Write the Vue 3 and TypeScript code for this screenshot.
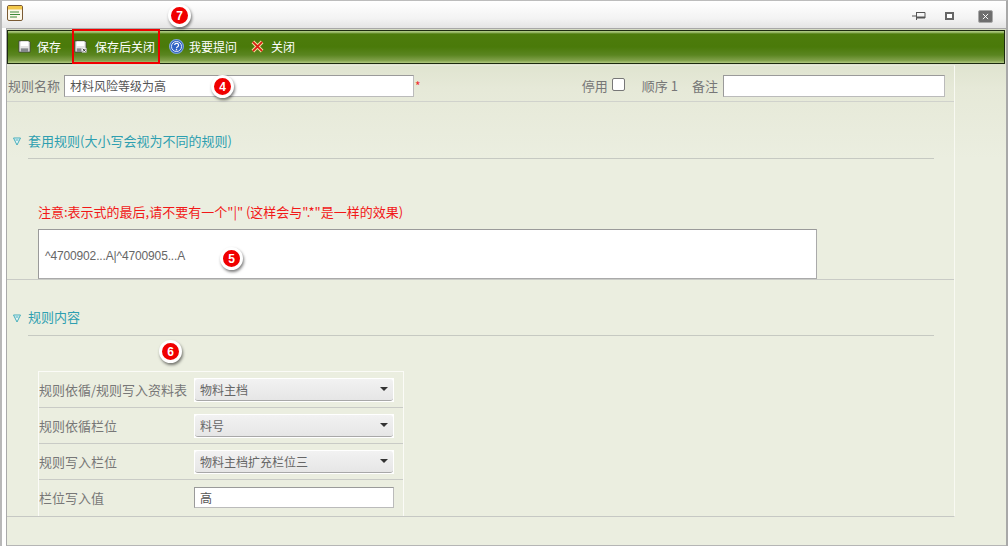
<template>
  <div class="window">
    <header class="titlebar">
      <svg class="app-icon" viewBox="0 0 16 16">
        <rect x="0.5" y="0.5" width="15" height="15" rx="1.5" fill="#fdf8ea" stroke="#7a5a34" />
        <rect x="1" y="1" width="14" height="3.5" fill="#f3c84c" />
        <path d="M3 7h9M3 9.5h10M3 12h7" stroke="#3f8a3a" stroke-width="1" />
      </svg>
      <div class="win-controls">
        <svg viewBox="0 0 14 10" class="win-pin">
          <path d="M0 5h4M4.500 1.500h8.500v5.500h-8.500zM4.500 1v8" fill="none" stroke="#555" stroke-width="1" />
          <path d="M5 5.500h8v1.500h-8z" fill="#555" />
        </svg>
        <span class="win-max"></span>
        <span class="win-close">
          <svg viewBox="0 0 8 8"><path d="M1 1l6 6M7 1l-6 6" stroke="#fff" stroke-width="1.100" /></svg>
        </span>
      </div>
    </header>

    <div class="body">
      <nav class="toolbar">
        <button v-for="btn in buttons" :key="btn.label" class="tool-btn" :class="btn.cls" type="button">
          <svg v-if="btn.icon === 'save'" class="tool-icon" viewBox="0 0 14 14">
            <path d="M1 1h10.500l1.500 1.500v10.500h-12z" fill="#e4e4e4" stroke="#3a3a3a" stroke-width="0.800" />
            <rect x="3" y="1.500" width="8" height="5" fill="#fff" />
            <rect x="3" y="9" width="8" height="4" fill="#85888c" />
          </svg>
          <svg v-else-if="btn.icon === 'saveclose'" class="tool-icon" viewBox="0 0 14 14">
            <path d="M1 1h10.500l1.500 1.500v10.500h-12z" fill="#e4e4e4" stroke="#3a3a3a" stroke-width="0.800" />
            <rect x="3" y="1.500" width="8" height="5" fill="#fff" />
            <rect x="3" y="9" width="5" height="4" fill="#85888c" />
            <rect x="8.500" y="8.500" width="5" height="5" fill="#eee" />
            <path d="M9.500 9.500l3 3M12.500 9.500l-3 3" stroke="#333" stroke-width="1" />
          </svg>
          <svg v-else-if="btn.icon === 'help'" class="tool-icon help-icon" viewBox="0 0 14 14">
            <circle cx="7" cy="7" r="6.500" fill="#2f62c4" stroke="#7fa6d8" />
            <circle cx="7" cy="7" r="4.700" fill="none" stroke="#fff" stroke-width="0.800" />
            <path d="M5.300 5.700a1.800 1.700 0 1 1 2.700 1.500c-.7.400-1 .7-1 1.400" fill="none" stroke="#fff" stroke-width="1.100" />
            <rect x="6.400" y="9.400" width="1.200" height="1.200" fill="#fff" />
          </svg>
          <svg v-else class="tool-icon" viewBox="0 0 14 14">
            <path d="M2 2l10 10M12 2l-10 10" stroke="#f4e3a0" stroke-width="4" />
            <path d="M2 2l10 10M12 2l-10 10" stroke="#d81e12" stroke-width="2" />
          </svg>
          <span>{{ btn.label }}</span>
        </button>
      </nav>

      <div class="panel">
        <div class="head-row">
          <label class="name-label">规则名称</label>
          <input class="name-input" type="text" value="材料风险等级为高" />
          <span class="required">*</span>
          <div class="head-right">
            <label>停用</label>
            <input class="check" type="checkbox" />
            <label class="order">顺序 1</label>
            <label>备注</label>
            <input class="note-input" type="text" />
          </div>
        </div>

        <section class="section-one">
          <h3 class="section-title">
            <svg class="arrow" viewBox="0 0 8 9"><path d="M0.500 1h7l-3.500 7zM2.500 3h3" fill="#e8f6f8" stroke="#45aebb" stroke-width="1" /></svg>
            <span>套用规则(大小写会视为不同的规则)</span>
          </h3>
          <p class="notice">注意:表示式的最后,请不要有一个"|" (这样会与".*"是一样的效果)</p>
          <div class="regex-box">^4700902...A|^4700905...A</div>
        </section>

        <section class="section-two">
          <h3 class="section-title">
            <svg class="arrow" viewBox="0 0 8 9"><path d="M0.500 1h7l-3.500 7zM2.500 3h3" fill="#e8f6f8" stroke="#45aebb" stroke-width="1" /></svg>
            <span>规则内容</span>
          </h3>
          <div class="form-table">
            <div v-for="row in rows" :key="row.label" class="form-row">
              <label class="form-label">{{ row.label }}</label>
              <div v-if="row.select" class="select-wrap">
                <div class="select-inner">
                  <span>{{ row.value }}</span>
                  <i class="caret"></i>
                </div>
              </div>
              <input v-else class="value-input" type="text" :value="row.value" />
            </div>
          </div>
        </section>
      </div>
    </div>

    <span class="redbox"></span>
    <span class="badge b7">7</span>
    <span class="badge b4">4</span>
    <span class="badge b5">5</span>
    <span class="badge b6">6</span>
  </div>
</template>

<script setup lang="ts">
interface ToolButton {
  label: string;
  icon: string;
  cls: string;
}

interface FormRow {
  label: string;
  value: string;
  select: boolean;
}

const buttons: ToolButton[] = [
  { label: '保存', icon: 'save', cls: 'btn-save' },
  { label: '保存后关闭', icon: 'saveclose', cls: 'btn-saveclose' },
  { label: '我要提问', icon: 'help', cls: 'btn-help' },
  { label: '关闭', icon: 'close', cls: 'btn-close' }
];

const rows: FormRow[] = [
  { label: '规则依循/规则写入资料表', value: '物料主档', select: true },
  { label: '规则依循栏位', value: '料号', select: true },
  { label: '规则写入栏位', value: '物料主档扩充栏位三', select: true },
  { label: '栏位写入值', value: '高', select: false }
];
</script>

<style>
html,
body {
  margin: 0;
  overflow: hidden;
}
</style>

<style scoped>
.window {
  position: relative;
  box-sizing: border-box;
  width: 1008px;
  height: 546px;
  display: flex;
  flex-direction: column;
  background: #fff;
  border-top: 1px solid #bcbcbc;
  border-left: 2px solid #b8b8b8;
  border-right: 2px solid #a8a8a8;
  font-family: "Noto Sans CJK SC", "Liberation Sans", sans-serif;
  font-size: 13px;
  color: #777;
}

.titlebar {
  height: 27px;
  flex: none;
  display: flex;
  align-items: center;
  justify-content: space-between;
  padding: 0 13px 0 5px;
  background: linear-gradient(#fff, #f3f3f3 65%, #e4e4e4);
}

.app-icon {
  width: 16px;
  height: 16px;
  margin-bottom: 3px;
}

.win-controls {
  display: flex;
  align-items: center;
  gap: 20px;
  margin-top: 3px;
}

.win-pin {
  width: 14px;
  height: 10px;
  margin-right: -1px;
}

.win-max {
  box-sizing: border-box;
  width: 9px;
  height: 8px;
  margin-right: 4px;
  border: 2px solid #666;
  background: #fff;
}

.win-close {
  width: 13px;
  height: 11px;
  display: flex;
  align-items: center;
  justify-content: center;
  background: #6e6e6e;
  border: 1px solid #aaa;
  border-radius: 2px;
}

.win-close svg {
  width: 7px;
  height: 7px;
}

.body {
  flex: 1;
  margin-left: 4px;
  display: flex;
  flex-direction: column;
  border-top: 1px solid #a8a8a8;
  border-left: 1px solid #a9a9a9;
  border-bottom: 1px solid #b5b5b5;
  background: linear-gradient(#d6dcc4, #e6e9d8 60px, #ebeee0 130px);
}

.toolbar {
  box-sizing: border-box;
  flex: none;
  height: 34px;
  margin: 1px 1px 1px 0;
  padding: 0 0 2px 7px;
  display: flex;
  align-items: center;
  gap: 0;
  border: 1px solid #1c2a10;
  background: linear-gradient(#a9c67c 0, #a9c67c 1px, #4d7c0c 3px, #4a7a0a 50%, #5a8520 75%, #80a04a 92%, #b2ca82 100%);
}

.tool-btn {
  display: flex;
  align-items: center;
  height: 100%;
  padding: 0;
  border: 0;
  background: none;
  color: #fff;
  font: inherit;
  font-size: 12px;
}

.tool-icon {
  width: 13px;
  height: 13px;
  flex: none;
}

.help-icon {
  width: 15px;
  height: 15px;
}

.btn-save {
  width: 57px;
  gap: 6px;
  padding-left: 3px;
  box-sizing: border-box;
}

.btn-saveclose {
  width: 97px;
  gap: 8px;
  padding-left: 2px;
  box-sizing: border-box;
}

.btn-help {
  width: 82px;
  gap: 5px;
  box-sizing: border-box;
}

.btn-close {
  gap: 7px;
}

.panel {
  width: 948px;
  box-sizing: border-box;
  display: flex;
  flex-direction: column;
  border-top: 1px solid #e6e8dc;
  border-right: 1px solid #f8f9f2;
  border-bottom: 1px solid #c6c8c4;
}

.head-row {
  box-sizing: border-box;
  height: 36px;
  display: flex;
  align-items: center;
  padding: 4px 9px 0 1px;
  border-bottom: 1px solid #d0d2cc;
}

.name-label {
  width: 56px;
  color: #777;
}

.name-input {
  box-sizing: border-box;
  width: 350px;
  height: 22px;
  padding: 0 5px;
  border: 1px solid #9a9a9a;
  border-right-color: #bbb;
  border-bottom-color: #bbb;
  background: #fff;
  color: #555;
  font: inherit;
  font-size: 12px;
  outline: none;
}

.required {
  margin-left: 1px;
  color: #f03030;
  font-size: 12px;
}

.head-right {
  margin-left: auto;
  display: flex;
  align-items: center;
}

.check {
  appearance: none;
  box-sizing: border-box;
  width: 13px;
  height: 13px;
  margin: 0 17px 2px 4px;
  border: 1px solid #777;
  border-radius: 2px;
  background: #fff;
}

.order {
  margin-right: 14px;
}

.note-input {
  box-sizing: border-box;
  width: 222px;
  height: 22px;
  margin-left: 5px;
  border: 1px solid #9a9a9a;
  border-right-color: #bbb;
  border-bottom-color: #bbb;
  background: #fff;
}

.section-title {
  position: relative;
  display: flex;
  align-items: center;
  height: 28px;
  margin: 0;
  font: inherit;
  font-weight: 400;
  color: #2e9fb0;
}

.arrow {
  width: 8px;
  height: 9px;
  margin: 0 7px 0 6px;
}

.section-title span {
  line-height: 28px;
  height: 28px;
}

.section-two .section-title span {
  line-height: 26px;
}

.section-title::after {
  content: "";
  position: absolute;
  left: 21px;
  right: 20px;
  bottom: -4px;
  height: 1px;
  background: #c6c9c2;
}

.section-one {
  box-sizing: border-box;
  height: 178px;
  padding-top: 25px;
  border-bottom: 1px solid #c9cbc6;
}

.notice {
  margin: 48px 0 0 31px;
  height: 18px;
  line-height: 18px;
  font-size: 13px;
  color: #f21818;
}

.regex-box {
  box-sizing: border-box;
  width: 779px;
  height: 50px;
  margin: 8px 0 0 31px;
  padding: 4px 6px 0;
  display: flex;
  align-items: center;
  border: 1px solid #9a9a9a;
  border-right-color: #aaa;
  border-bottom-color: #aaa;
  background: #fff;
  font-family: "Liberation Sans", sans-serif;
  font-size: 12px;
  letter-spacing: -0.15px;
  color: #666;
}

.section-two {
  padding-top: 24px;
}

.form-table {
  width: 366px;
  box-sizing: border-box;
  margin: 39px 0 0 31px;
  border-top: 1px solid #fbfbf7;
  border-left: 1px solid #fbfbf7;
  border-right: 1px solid #fbfbf7;
}

.form-row {
  box-sizing: border-box;
  height: 36px;
  display: flex;
  align-items: center;
  border-bottom: 1px solid #c9cbc6;
}

.form-row:last-child {
  padding-bottom: 2px;
  border-bottom: 0;
}

.form-label {
  width: 155px;
  flex: none;
  white-space: nowrap;
  color: #777;
}

.select-wrap {
  box-sizing: border-box;
  width: 200px;
  height: 24px;
  padding: 1px 1px 1px 1px;
  background: #fff;
}

.select-inner {
  box-sizing: border-box;
  height: 100%;
  display: flex;
  align-items: center;
  justify-content: space-between;
  padding: 0 5px 0 5px;
  border-radius: 3px;
  border-bottom: 1px solid #a8a8a8;
  background: linear-gradient(#f2f2f2, #e6e6e6);
  font-size: 12px;
  color: #666;
}

.caret {
  width: 0;
  height: 0;
  border-left: 4px solid transparent;
  border-right: 4px solid transparent;
  border-top: 4px solid #333;
}

.value-input {
  box-sizing: border-box;
  width: 200px;
  height: 21px;
  padding: 0 5px;
  border: 1px solid #9a9a9a;
  border-right-color: #bbb;
  border-bottom-color: #bbb;
  background: #fff;
  color: #555;
  font: inherit;
  font-size: 12px;
}

.redbox {
  position: absolute;
  left: 70px;
  top: 28px;
  width: 88px;
  height: 35px;
  box-sizing: border-box;
  border: 2px solid #f00000;
}

.badge {
  position: absolute;
  box-sizing: border-box;
  width: 23px;
  height: 23px;
  display: flex;
  align-items: center;
  justify-content: center;
  border: 3px solid #fff;
  border-radius: 50%;
  background: #f00000;
  box-shadow: 1px 2px 3px rgba(0, 0, 0, 0.5);
  color: #fff;
  font-family: "Liberation Sans", sans-serif;
  font-size: 12px;
  font-weight: 700;
}

.b7 {
  left: 166px;
  top: 3px;
}

.b4 {
  left: 209px;
  top: 74px;
}

.b5 {
  left: 218px;
  top: 246px;
}

.b6 {
  left: 157px;
  top: 339px;
}
</style>
